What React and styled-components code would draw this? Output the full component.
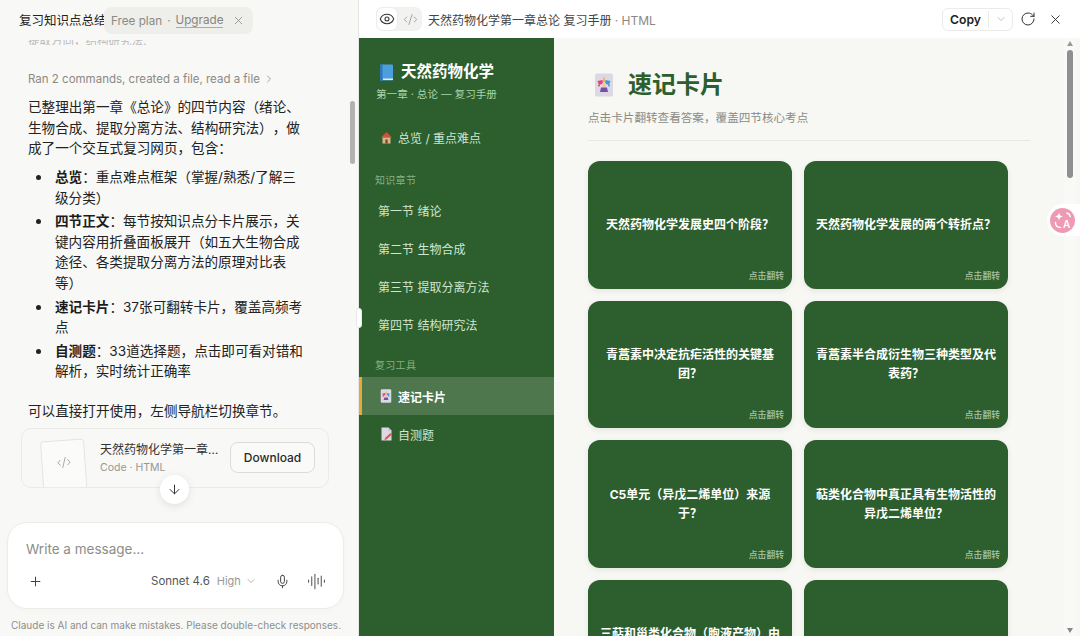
import React from 'react';
import styled, { createGlobalStyle } from 'styled-components';
import { Eye, CodeXml, X, Plus, Mic, ChevronDown, RotateCw, ArrowDown, ChevronRight, AudioLines } from 'lucide-react';

const Global = createGlobalStyle`
  html, body { margin: 0; padding: 0; height: 636px; overflow: hidden; background: #f8f8f6; }
  * { box-sizing: border-box; }
  body { font-family: Inter, "Noto Sans CJK SC", sans-serif; color: #222; text-spacing-trim: space-all; }
`;

const Page = styled.div`
  display: flex; width: 1080px; height: 636px; position: relative; overflow: hidden;
`;
const Left = styled.aside`
  width: 359px; flex: none; display: flex; flex-direction: column; background: #f8f8f6;
  border-right: 1px solid #e6e6e3; position: relative;
`;
const Header = styled.header`
  height: 40px; flex: none; padding: 12px 0 0 19px; font-size: 12.5px; line-height: 17px; color: #222;
  white-space: nowrap; overflow: hidden;
`;
const PlanPill = styled.div`
  position: absolute; left: 104px; top: 7px; width: 149px; height: 27px; background: #eeeeeb; border-radius: 8px;
  display: flex; align-items: center; padding: 0 7px; gap: 5px; font-size: 11.7px; color: #8b8b86;
`;
const UpgradeLink = styled.span`
  border-bottom: 1px solid #aaa; line-height: 14px; color: #85857f;
`;
const PlanClose = styled.span`
  margin-left: auto; display: flex; color: #8b8b86; margin-right: 1px;
`;
const Stream = styled.div`
  flex: none; height: 449px; padding: 0 29px 0 21px; overflow: hidden; position: relative;
`;
const FadedLine = styled.p`
  margin: -6px 0 0 7px; font-size: 11.5px; line-height: 14px; color: #bbb; height: 11px; overflow: hidden;
`;
const ActionLine = styled.div`
  margin: 26px 0 0 7px; font-size: 11.5px; line-height: 16px; color: #8a8a84; display: flex; align-items: center; gap: 3px;
`;
const Para = styled.p`
  margin: ${p => p.$top}px 0 0 7px; width: 280px; font-size: 13.6px; line-height: 20.5px; color: #222;
`;
const List = styled.ul`
  margin: 8.5px 0 0 7px; padding: 0 0 0 27px; width: 280px; font-size: 13.6px; line-height: 20.5px; list-style: none;
`;
const Item = styled.li`
  margin-bottom: 3.3px; position: relative;
  &::before { content: ''; position: absolute; left: -19px; top: 8px; width: 5px; height: 5px; border-radius: 50%; background: #222; }
  strong { font-weight: 700; color: #1c1c1c; }
`;
const FileCard = styled.div`
  margin-top: 7px; width: 308px; height: 60px; border: 1px solid #ebebe7; border-radius: 10px;
  display: flex; align-items: flex-start; overflow: hidden; background: #f8f8f6;
`;
const Thumb = styled.div`
  width: 44px; height: 60px; margin: 11px 0 0 20px; flex: none; background: #fbfbfa; border: 1px solid #e4e4e0;
  border-radius: 4px; transform: rotate(-4deg); display: flex; align-items: flex-start; justify-content: center;
  padding-top: 14px; color: #999;
`;
const FileInfo = styled.div`
  width: 121px; margin: 12px 0 0 14px; flex: none;
`;
const FileTitle = styled.div`
  font-size: 12px; line-height: 18px; color: #333; white-space: nowrap; overflow: hidden; text-overflow: ellipsis;
`;
const FileMeta = styled.div`
  font-size: 10.5px; line-height: 15px; color: #979792; margin-top: 1px;
`;
const DownloadButton = styled.button`
  width: 85px; height: 31px; margin: 13px 0 0 9px; flex: none; background: #fafaf8; border: 1px solid #dcdcd7;
  border-radius: 8px; font: 500 12px Inter, sans-serif; color: #2a2a2a; padding: 0;
`;
const ScrollDown = styled.div`
  position: absolute; left: 160px; top: 475px; width: 29px; height: 29px; border-radius: 50%; background: #fff;
  box-shadow: 0 2px 8px rgba(0,0,0,.1); display: flex; align-items: center; justify-content: center; color: #333;
`;
const LeftThumb = styled.div`
  position: absolute; left: 350px; top: 101px; width: 5px; height: 63px; border-radius: 3px; background: #b2b2b0;
`;
const Composer = styled.div`
  margin: 33px 0 0 7px; width: 337px; height: 87px; flex: none; background: #fff; border: 1px solid #ecece8; border-radius: 20px;
  padding: 16px 13px 0 20px; box-shadow: 0 2px 6px rgba(0,0,0,.02);
`;
const Placeholder = styled.div`
  margin-left: -2px; font-size: 13.5px; line-height: 20px; color: #8d8d88;
`;
const ComposerTools = styled.div`
  display: flex; align-items: center; margin-top: 10px; height: 24px; color: #444;
`;
const ModelName = styled.span`
  margin-left: 108px; font-size: 11.5px; color: #555; font-weight: 400; white-space: nowrap;
`;
const Effort = styled.span`
  margin-left: 7px; font-size: 11px; color: #9a9a95;
`;
const ChevronWrap = styled.span`
  display: flex; margin-left: 4px; color: #999;
`;
const MicWrap = styled.span`
  display: flex; margin-left: 18px; color: #444;
`;
const WaveWrap = styled.span`
  display: flex; margin-left: 17px; color: #555;
`;
const Disclaimer = styled.div`
  margin: 9px 0 0 11px; font-size: 10px; line-height: 14px; color: #8e8e89; white-space: nowrap;
`;
const Handle = styled.div`
  position: absolute; left: 356px; top: 308px; width: 6px; height: 20px; background: #fff; border-radius: 3px; border: 1px solid #e8e8e8; z-index: 3;
`;

const Right = styled.main`
  flex: 1; min-width: 0; display: flex; flex-direction: column; background: #fff;
`;
const TopBar = styled.div`
  height: 38px; flex: none; display: flex; align-items: center; padding: 0 17px 0 17px; background: #fff;
`;
const Toggle = styled.div`
  width: 46px; height: 24px; background: #f2f2f0; border-radius: 7px; display: flex; align-items: center; flex: none; color: #999;
`;
const ToggleOn = styled.span`
  width: 22px; height: 24px; background: #fff; border: 1px solid #ecece9; border-radius: 7px; display: flex; align-items: center; justify-content: center; color: #333;
`;
const ToggleOff = styled.span`
  width: 24px; display: flex; justify-content: center; color: #999;
`;
const DocTitle = styled.div`
  margin-left: 6px; font-size: 12px; color: #444; white-space: nowrap;
  span { color: #888; }
`;
const CopyGroup = styled.div`
  margin-left: auto; width: 71px; height: 23px; border: 1px solid #ebebe8; border-radius: 6px; display: flex; align-items: center; background: #fff;
`;
const CopyLabel = styled.span`
  width: 46px; text-align: center; font-size: 12.2px; font-weight: 600; color: #222; border-right: 1px solid #ebebe8; line-height: 17px;
`;
const CopyArrow = styled.span`
  flex: 1; display: flex; justify-content: center; color: #aaa;
`;
const BarIcon = styled.span`
  display: flex; color: #333; margin-left: ${p => p.$gap}px;
`;
const Body = styled.div`
  flex: 1; min-height: 0; display: flex; position: relative;
`;
const Side = styled.nav`
  width: 195px; flex: none; background: #2d5e2d; padding: 23px 0 0 0; overflow: hidden;
`;
const Brand = styled.div`
  display: flex; align-items: center; gap: 6px; padding-left: 19px; font-size: 15.5px; font-weight: 700; color: #fff; line-height: 22px;
`;
const BrandSub = styled.div`
  padding-left: 17px; margin-top: 4px; font-size: 10.6px; line-height: 16px; color: #a9d5a9;
`;
const SideItem = styled.div`
  height: 38px; display: flex; align-items: center; gap: 5px; white-space: nowrap;
  padding-left: ${p => p.$active ? 18 : 19}px;
  font-size: 12px; color: ${p => p.$active ? '#fff' : '#cfe6cf'}; font-weight: ${p => p.$active ? 700 : 400};
  background: ${p => p.$active ? 'rgba(255,255,255,.16)' : 'transparent'};
  border-left: ${p => p.$active ? '3px solid #e8a93c' : '0'};
`;
const SideIcon = styled.span`
  display: flex; width: 14px; justify-content: center; margin-left: ${p => p.$active ? -1 : 1}px;
`;
const SideLabel = styled.div`
  padding-left: 16px; margin-top: ${p => p.$top}px; margin-bottom: ${p => p.$bottom}px; font-size: 10px; line-height: 14px; color: #85b185; letter-spacing: .3px;
`;
const SideTop = styled.div`
  margin-top: 15px;
`;
const Content = styled.div`
  flex: 1; min-width: 0; background: #f7f7f3; padding: 27px 0 0 34px; overflow: hidden; position: relative;
`;
const Heading = styled.h1`
  margin: 0; display: flex; align-items: center; gap: 14px; padding-left: 6px; font-size: 24px; line-height: 40px; font-weight: 700; color: #2d5e2d;
`;
const Subtitle = styled.p`
  margin: 4px 0 0; font-size: 11.6px; line-height: 18px; color: #8b8b85;
`;
const Rule = styled.div`
  width: 442px; height: 1px; background: #e8e8e3; margin: 13px 0 20px;
`;
const Grid = styled.div`
  display: grid; grid-template-columns: 204px 204px; column-gap: 12px; row-gap: 12px; grid-auto-rows: 127.5px;
`;
const Card = styled.div`
  background: #2d5e2d; border-radius: 12px; position: relative; display: flex; align-items: center; justify-content: center; padding: 0 12px;
  color: #fff; font-size: 12px; font-weight: 700; line-height: 19px; text-align: center; box-shadow: 0 2px 6px rgba(0,0,0,.08);
`;
const Flip = styled.span`
  position: absolute; right: 8px; bottom: 7px; font-size: 8.8px; line-height: 12px; font-weight: 500; color: #a8c4a8;
`;
const Track = styled.div`
  position: absolute; right: 4px; top: 0; width: 12px; height: 100%; background: #f9f9f7;
`;
const TrackThumb = styled.div`
  position: absolute; left: 3px; top: 12px; width: 6px; height: 128px; background: #8f8f8f; border-radius: 3px;
`;
const ArrowUp = styled.div`
  position: absolute; left: 3px; top: 3px; border-left: 3px solid transparent; border-right: 3px solid transparent; border-bottom: 5px solid #999;
`;
const ArrowDn = styled.div`
  position: absolute; left: 3px; bottom: 3px; border-left: 3px solid transparent; border-right: 3px solid transparent; border-top: 5px solid #888;
`;
const Translate = styled.div`
  position: absolute; right: 0; top: 166px; width: 33px; height: 32px; background: #fff; border-radius: 16px 0 0 16px; display: flex; align-items: center; padding-left: 3px; z-index: 3;
`;

const BookIcon = () => (
  <svg width="17" height="17" viewBox="0 0 17 17"><rect x="2" y="0.5" width="13" height="16" rx="1" fill="#4a9fdc"/><rect x="2" y="0.5" width="2.5" height="16" fill="#2c78b8"/><rect x="5" y="14.5" width="10" height="1.5" fill="#dfeaf2"/></svg>
);
const HouseIcon = () => (
  <svg width="13" height="13" viewBox="0 0 13 13"><path d="M1 6.5 6.5 1 12 6.5Z" fill="#c8553d"/><rect x="2.5" y="6.5" width="8" height="6" fill="#d9b58c"/><rect x="5.3" y="8.5" width="2.4" height="4" fill="#7a4a2a"/></svg>
);
const JokerIcon = ({ size = 14, width }) => (
  <svg width={width || size} height={size} viewBox="0 0 20 24"><rect x="1" y="0.5" width="18" height="23" rx="2" fill="#dcd8e6"/><path d="M10 3 11.5 9H8.5Z" fill="#f2b632"/><path d="M3.5 8 8.5 7 9 10.5 5 12Z" fill="#e0457b"/><path d="M16.5 8 11.5 7 11 10.5 15 12Z" fill="#3d9bd9"/><circle cx="10" cy="12" r="2.4" fill="#f2c9a8"/><path d="M6 19 7 14.5H13L14 19Z" fill="#7a4fa3"/><circle cx="5" cy="12.5" r="1" fill="#e0457b"/><circle cx="15" cy="12.5" r="1" fill="#3d9bd9"/></svg>
);
const MemoIcon = () => (
  <svg width="13" height="14" viewBox="0 0 13 14"><path d="M1.5.5H8.5L11.5 3.5V13.5H1.5Z" fill="#dcd8e6"/><path d="M8.5.5 11.5 3.5H8.5Z" fill="#b9b3c8"/><path d="M5 11 10.5 6 12 7.5 6.5 12.5 4.5 13Z" fill="#e2574c"/></svg>
);
const TranslateIcon = () => (
  <svg width="25" height="25" viewBox="0 0 25 25">
    <circle cx="12.5" cy="12.5" r="12.5" fill="#ef9ab5"/>
    <path d="M9 4.5c.5 2.6 1.4 3.5 4 4-2.6.5-3.5 1.4-4 4-.5-2.6-1.4-3.5-4-4 2.6-.5 3.5-1.4 4-4Z" fill="#fff"/>
    <path d="M5.5 14.5c0 3 2 5 5 5M17 5c1.8.6 3 1.9 3.3 3.6" fill="none" stroke="#fff" strokeWidth="1.4" strokeLinecap="round"/>
    <text x="13" y="20" fontFamily="Inter, sans-serif" fontSize="10" fontWeight="600" fill="#fff">A</text>
  </svg>
);

const CO = '\uFF1A';
const CM = '\uFF0C';
const LP = '\uFF08';
const RP = '\uFF09';
const QM = '\uFF1F';

const cards = [
  `天然药物化学发展史四个阶段${QM}`, `天然药物化学发展的两个转折点${QM}`,
  `青蒿素中决定抗疟活性的关键基团${QM}`, `青蒿素半合成衍生物三种类型及代表药${QM}`,
  `C5单元${LP}异戊二烯单位${RP}来源于${QM}`, `萜类化合物中真正具有生物活性的异戊二烯单位${QM}`,
  `三萜和甾类化合物${LP}胞液产物${RP}由什么途径合成${QM}`, '',
];

export default function App() {
  return (
    <Page>
      <Global />
      <Left>
        <Header>复习知识点总结</Header>
        <PlanPill>
          <span>Free plan</span><span>·</span><UpgradeLink>Upgrade</UpgradeLink>
          <PlanClose><X size={13} strokeWidth={1.5} /></PlanClose>
        </PlanPill>
        <Stream>
          <FadedLine>提取方向{CM}结构研究法.</FadedLine>
          <ActionLine>Ran 2 commands, created a file, read a file <ChevronRight size={12} strokeWidth={1.5} /></ActionLine>
          <Para $top={10}>{`已整理出第一章《总论》的四节内容${LP}绪论、生物合成、提取分离方法、结构研究法${RP}${CM}做成了一个交互式复习网页${CM}包含${CO}`}</Para>
          <List>
            <Item><strong>总览</strong>{`${CO}重点难点框架${LP}掌握/熟悉/了解三级分类${RP}`}</Item>
            <Item><strong>四节正文</strong>{`${CO}每节按知识点分卡片展示${CM}关键内容用折叠面板展开${LP}如五大生物合成途径、各类提取分离方法的原理对比表等${RP}`}</Item>
            <Item><strong>速记卡片</strong>{`${CO}37张可翻转卡片${CM}覆盖高频考点`}</Item>
            <Item><strong>自测题</strong>{`${CO}33道选择题${CM}点击即可看对错和解析${CM}实时统计正确率`}</Item>
          </List>
          <Para $top={19}>{`可以直接打开使用${CM}左侧导航栏切换章节。`}</Para>
          <FileCard>
            <Thumb><CodeXml size={15} strokeWidth={1.3} /></Thumb>
            <FileInfo>
              <FileTitle>天然药物化学第一章总论 复习手册</FileTitle>
              <FileMeta>Code · HTML</FileMeta>
            </FileInfo>
            <DownloadButton>Download</DownloadButton>
          </FileCard>
        </Stream>
        <ScrollDown><ArrowDown size={15} strokeWidth={1.6} /></ScrollDown>
        <LeftThumb />
        <Composer>
          <Placeholder>Write a message…</Placeholder>
          <ComposerTools>
            <Plus size={15} strokeWidth={1.6} />
            <ModelName>Sonnet 4.6</ModelName>
            <Effort>High</Effort>
            <ChevronWrap><ChevronDown size={12} strokeWidth={1.5} /></ChevronWrap>
            <MicWrap><Mic size={15} strokeWidth={1.6} /></MicWrap>
            <WaveWrap><AudioLines size={19} strokeWidth={1.3} /></WaveWrap>
          </ComposerTools>
        </Composer>
        <Disclaimer>Claude is AI and can make mistakes. Please double-check responses.</Disclaimer>
      </Left>
      <Handle />
      <Right>
        <TopBar>
          <Toggle>
            <ToggleOn><Eye size={16} strokeWidth={1.6} /></ToggleOn>
            <ToggleOff><CodeXml size={15} strokeWidth={1.4} /></ToggleOff>
          </Toggle>
          <DocTitle>天然药物化学第一章总论 复习手册<span> · HTML</span></DocTitle>
          <CopyGroup>
            <CopyLabel>Copy</CopyLabel>
            <CopyArrow><ChevronDown size={12} strokeWidth={1.5} /></CopyArrow>
          </CopyGroup>
          <BarIcon $gap={7}><RotateCw size={16} strokeWidth={1.5} /></BarIcon>
          <BarIcon $gap={12}><X size={15} strokeWidth={1.5} /></BarIcon>
        </TopBar>
        <Body>
          <Side>
            <Brand><BookIcon />天然药物化学</Brand>
            <BrandSub>第一章 · 总论 — 复习手册</BrandSub>
            <SideTop>
              <SideItem><SideIcon><HouseIcon /></SideIcon>总览 / 重点难点</SideItem>
            </SideTop>
            <SideLabel $top={17} $bottom={4}>知识章节</SideLabel>
            <SideItem>第一节 绪论</SideItem>
            <SideItem>第二节 生物合成</SideItem>
            <SideItem>第三节 提取分离方法</SideItem>
            <SideItem>第四节 结构研究法</SideItem>
            <SideLabel $top={15} $bottom={5}>复习工具</SideLabel>
            <SideItem $active><SideIcon $active><JokerIcon size={14} width={12} /></SideIcon>速记卡片</SideItem>
            <SideItem><SideIcon><MemoIcon /></SideIcon>自测题</SideItem>
          </Side>
          <Content>
            <Heading><JokerIcon size={24} width={20} />速记卡片</Heading>
            <Subtitle>{`点击卡片翻转查看答案${CM}覆盖四节核心考点`}</Subtitle>
            <Rule />
            <Grid>
              {cards.map((c, i) => (
                <Card key={i}>{c}{i < 6 && <Flip>点击翻转</Flip>}</Card>
              ))}
            </Grid>
            <Track>
              <ArrowUp /><TrackThumb /><ArrowDn />
            </Track>
            <Translate><TranslateIcon /></Translate>
          </Content>
        </Body>
      </Right>
    </Page>
  );
}
